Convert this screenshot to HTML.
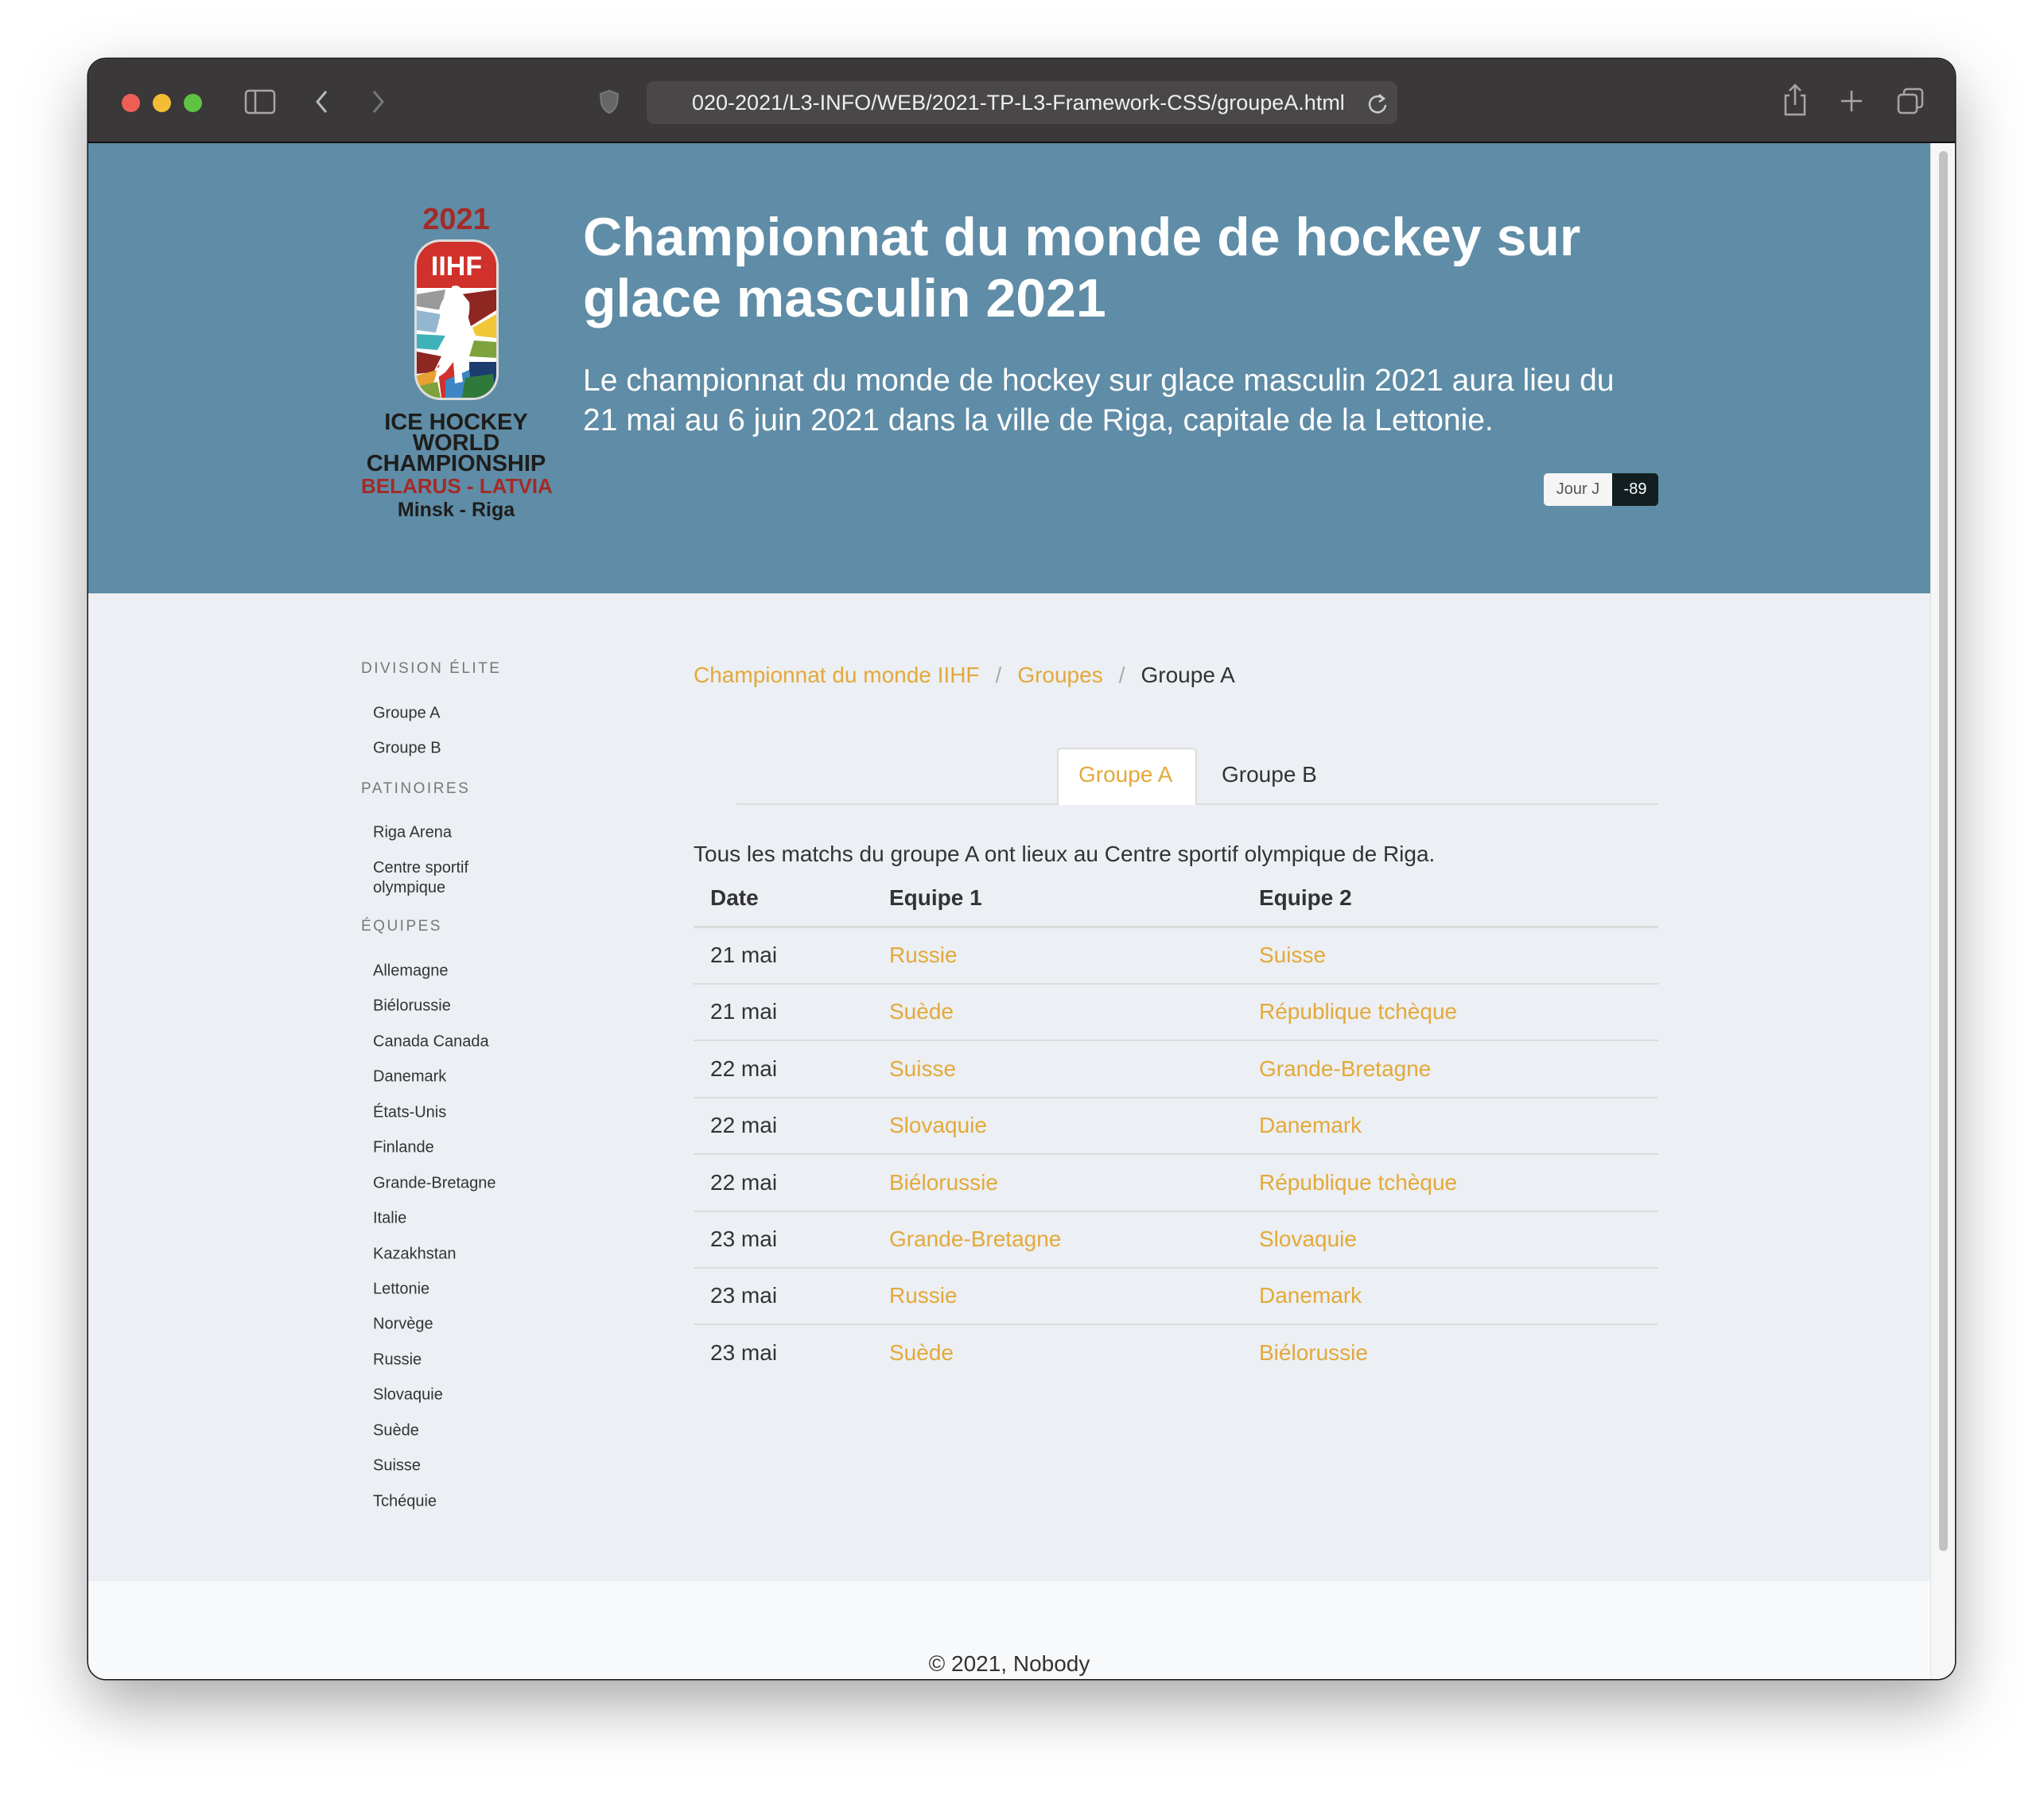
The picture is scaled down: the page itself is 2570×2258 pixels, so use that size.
<!DOCTYPE html>
<html><head><meta charset="utf-8"><style>
*{margin:0;padding:0;box-sizing:border-box}
body{width:2570px;height:2258px;background:#fff;font-family:"Liberation Sans",Arial,sans-serif;position:relative;overflow:hidden}
.win{position:absolute;left:111px;top:74px;width:2347px;height:2037px;border-radius:22px;overflow:hidden;box-shadow:0 30px 80px rgba(0,0,0,.35),0 0 0 1.5px #1a1a1a;background:#eceff3}
.tb{position:absolute;left:0;top:0;width:100%;height:106px;background:#3b3839;border-bottom:2px solid #111}
.dot{position:absolute;top:44px;width:23px;height:23px;border-radius:50%}
.url{position:absolute;left:702px;top:28px;width:944px;height:54px;background:#4a4748;border-radius:10px;color:#eee;font-size:27px;line-height:54px;padding-left:57px;white-space:nowrap}
.hdr{position:absolute;left:0;top:106px;width:2316px;height:566px;background:#5f8ca6}
.sb{position:absolute;left:2316px;top:106px;width:31px;height:1931px;background:#f6f6f6;border-left:1px solid #e2e2e2}
.thumb{position:absolute;left:2327px;top:116px;width:11px;height:1760px;background:#c2c2c2;border-radius:6px}
.abs{position:absolute;white-space:nowrap}
h1{position:absolute;left:622px;top:80px;color:#fff;font-size:68px;line-height:77px;font-weight:bold;width:1400px}
.lead{position:absolute;left:622px;top:274px;color:#fff;font-size:39px;line-height:50px;width:1340px}
.side-h{position:absolute;left:343px;font-size:19px;letter-spacing:2.5px;color:#777;transform:translateY(-50%)}
.side-i{position:absolute;left:358px;font-size:20px;color:#333;transform:translateY(-50%);line-height:25px}
.cell{position:absolute;font-size:28px;color:#333;transform:translateY(-50%)}
.y,.cell.y{color:#e3a93a}
.hr{position:absolute;left:761px;width:1213px;height:2px;background:#dcdcdc}
</style></head><body>
<div class="win">
 <div class="tb">
  <div class="dot" style="left:42px;background:#ed5f57"></div>
  <div class="dot" style="left:81px;background:#f5bd36"></div>
  <div class="dot" style="left:120px;background:#5fc245"></div>
  <svg class="abs" style="left:196px;top:38px" width="40" height="32" viewBox="0 0 40 32"><rect x="2" y="2" width="36" height="28" rx="4" fill="none" stroke="#a8a5a6" stroke-width="2.5"/><line x1="14" y1="2" x2="14" y2="30" stroke="#a8a5a6" stroke-width="2.5"/></svg>
  <svg class="abs" style="left:284px;top:38px" width="20" height="32"><path d="M15 3 L4 16 L15 29" fill="none" stroke="#bbb" stroke-width="3"/></svg>
  <svg class="abs" style="left:355px;top:38px" width="20" height="32"><path d="M4 3 L15 16 L4 29" fill="none" stroke="#777" stroke-width="3"/></svg>
  <svg class="abs" style="left:642px;top:38px" width="26" height="32"><path d="M13 2 L24 6 L23 18 Q20 27 13 30 Q6 27 3 18 L2 6 Z" fill="#666" stroke="#777" stroke-width="2"/></svg>
  <div class="url">020-2021/L3-INFO/WEB/2021-TP-L3-Framework-CSS/groupeA.html</div>
  <svg class="abs" style="left:1608px;top:42px" width="26" height="28"><path d="M20 8 A10 10 0 1 0 23 16" fill="none" stroke="#ccc" stroke-width="2.5"/><path d="M15 3 L21 8 L15 12" fill="none" stroke="#ccc" stroke-width="2.5"/></svg>
  <svg class="abs" style="left:2130px;top:30px" width="32" height="44"><path d="M9 16 H4 V40 H28 V16 H23 M16 28 V3 M9 10 L16 3 L23 10" fill="none" stroke="#a8a5a6" stroke-width="2.5"/></svg>
  <svg class="abs" style="left:2202px;top:38px" width="30" height="30"><path d="M15 2 V28 M2 15 H28" stroke="#a8a5a6" stroke-width="2.5"/></svg>
  <svg class="abs" style="left:2274px;top:36px" width="34" height="34"><rect x="9" y="2" width="23" height="23" rx="4" fill="none" stroke="#a8a5a6" stroke-width="2.5"/><rect x="2" y="9" width="23" height="23" rx="4" fill="#3b3839" stroke="#a8a5a6" stroke-width="2.5"/></svg>
 </div>
 <div class="hdr">
  <div class="abs" style="left:343px;top:75px;width:239px;text-align:center;color:#a42a26;font-weight:bold;font-size:38px">2021</div>
  <svg class="abs" style="left:409px;top:120px" width="108" height="204" viewBox="0 0 108 204">
   <defs><clipPath id="c"><rect x="4" y="4" width="100" height="196" rx="30"/></clipPath></defs>
   <rect x="1" y="1" width="106" height="202" rx="33" fill="#ddd"/>
   <g clip-path="url(#c)">
    <rect x="0" y="0" width="108" height="210" fill="#fff"/>
    <rect x="0" y="0" width="108" height="62" fill="#d0312a"/>
    <polygon points="4,70 40,64 35,90 4,85" fill="#9a9a9a"/>
    <polygon points="4,90 34,95 28,118 4,115" fill="#93b7cf"/>
    <polygon points="4,120 40,122 30,140 4,138" fill="#3fb2b8"/>
    <polygon points="4,142 35,148 25,168 4,170" fill="#8e2621"/>
    <polygon points="4,172 30,165 22,192 4,190" fill="#e8a132"/>
    <polygon points="60,70 104,64 104,90 72,110" fill="#8e2621"/>
    <polygon points="74,112 104,95 104,125 78,122" fill="#f1c73a"/>
    <polygon points="76,128 104,130 104,150 70,148" fill="#7fa33c"/>
    <polygon points="70,155 104,155 104,200 70,200" fill="#1c3d6e"/>
    <polygon points="30,160 55,150 60,200 35,200" fill="#d0312a"/>
    <polygon points="40,178 70,165 75,200 40,205" fill="#3c86c6"/>
    <polygon points="65,175 100,170 104,205 60,205" fill="#2f7a3b"/>
    <polygon points="8,185 30,180 35,205 8,205" fill="#7fa33c"/>
    <path d="M48 60 Q60 56 62 70 L70 80 Q72 100 62 112 L66 130 L58 150 L62 180 L52 182 L50 155 L40 168 L30 175 L28 168 L38 150 L42 128 L36 110 L32 90 Q36 72 48 68 Z" fill="#fff"/>
   </g>
   <text x="54" y="46" text-anchor="middle" fill="#fff" font-family="Liberation Sans" font-weight="bold" font-size="34">IIHF</text>
  </svg>
  <div class="abs" style="left:343px;top:338px;width:239px;text-align:center;color:#1d1d1b;font-weight:bold;font-size:29px;line-height:26px">ICE HOCKEY<br>WORLD<br>CHAMPIONSHIP</div>
  <div class="abs" style="left:343px;top:418px;width:239px;text-align:center;color:#a42a26;font-weight:bold;font-size:26px;line-height:26px">BELARUS - LATVIA</div>
  <div class="abs" style="left:343px;top:448px;width:239px;text-align:center;color:#1d1d1b;font-weight:bold;font-size:25px;line-height:26px">Minsk - Riga</div>
  <h1>Championnat du monde de hockey sur glace masculin 2021</h1>
  <div class="lead">Le championnat du monde de hockey sur glace masculin 2021 aura lieu du 21 mai au 6 juin 2021 dans la ville de Riga, capitale de la Lettonie.</div>
  <div class="abs" style="left:1830px;top:415px;width:86px;height:41px;background:#f5f5f5;border-radius:5px 0 0 5px;color:#555;font-size:20px;line-height:41px;text-align:center">Jour J</div>
  <div class="abs" style="left:1916px;top:415px;width:58px;height:41px;background:#121e21;border-radius:0 5px 5px 0;color:#fff;font-size:20px;line-height:41px;text-align:center">-89</div>
 </div>
 <div class="sb"></div><div class="thumb"></div>

 <div class="side-h" style="top:767px">DIVISION ÉLITE</div>
 <div class="side-i" style="top:823px">Groupe A</div>
 <div class="side-i" style="top:867px">Groupe B</div>
 <div class="side-h" style="top:918px">PATINOIRES</div>
 <div class="side-i" style="top:973px">Riga Arena</div>
 <div class="side-i" style="top:1030px">Centre sportif<br>olympique</div>
 <div class="side-h" style="top:1091px">ÉQUIPES</div>
 <div class="side-i" style="top:1147px">Allemagne</div>
 <div class="side-i" style="top:1191px">Biélorussie</div>
 <div class="side-i" style="top:1236px">Canada Canada</div>
 <div class="side-i" style="top:1280px">Danemark</div>
 <div class="side-i" style="top:1325px">États-Unis</div>
 <div class="side-i" style="top:1369px">Finlande</div>
 <div class="side-i" style="top:1414px">Grande-Bretagne</div>
 <div class="side-i" style="top:1458px">Italie</div>
 <div class="side-i" style="top:1503px">Kazakhstan</div>
 <div class="side-i" style="top:1547px">Lettonie</div>
 <div class="side-i" style="top:1591px">Norvège</div>
 <div class="side-i" style="top:1636px">Russie</div>
 <div class="side-i" style="top:1680px">Slovaquie</div>
 <div class="side-i" style="top:1725px">Suède</div>
 <div class="side-i" style="top:1769px">Suisse</div>
 <div class="side-i" style="top:1814px">Tchéquie</div>

 <div class="cell" style="left:761px;top:775px"><span class="y">Championnat du monde IIHF</span><span style="color:#aaa;padding:0 20px">/</span><span class="y">Groupes</span><span style="color:#aaa;padding:0 20px">/</span>Groupe A</div>
 <div class="abs" style="left:815px;top:936px;width:1159px;height:2px;background:#dcdcdc"></div>
 <div class="abs" style="left:1218px;top:866px;width:176px;height:72px;background:#fff;border:2px solid #dcdcdc;border-bottom:none;border-radius:6px 6px 0 0"></div>
 <div class="cell y" style="left:1245px;top:900px">Groupe A</div>
 <div class="cell" style="left:1425px;top:900px">Groupe B</div>
 <div class="cell" style="left:761px;top:1000px">Tous les matchs du groupe A ont lieux au Centre sportif olympique de Riga.</div>
 <div class="cell" style="left:782px;top:1055px;font-weight:bold">Date</div>
 <div class="cell" style="left:1007px;top:1055px;font-weight:bold">Equipe 1</div>
 <div class="cell" style="left:1472px;top:1055px;font-weight:bold">Equipe 2</div>
 <div class="hr" style="top:1090px;height:3px"></div>

 <div class="cell" style="left:782px;top:1127px">21 mai</div><div class="cell y" style="left:1007px;top:1127px">Russie</div><div class="cell y" style="left:1472px;top:1127px">Suisse</div>
 <div class="hr" style="top:1162px"></div>
 <div class="cell" style="left:782px;top:1198px">21 mai</div><div class="cell y" style="left:1007px;top:1198px">Suède</div><div class="cell y" style="left:1472px;top:1198px">République tchèque</div>
 <div class="hr" style="top:1233px"></div>
 <div class="cell" style="left:782px;top:1270px">22 mai</div><div class="cell y" style="left:1007px;top:1270px">Suisse</div><div class="cell y" style="left:1472px;top:1270px">Grande-Bretagne</div>
 <div class="hr" style="top:1305px"></div>
 <div class="cell" style="left:782px;top:1341px">22 mai</div><div class="cell y" style="left:1007px;top:1341px">Slovaquie</div><div class="cell y" style="left:1472px;top:1341px">Danemark</div>
 <div class="hr" style="top:1376px"></div>
 <div class="cell" style="left:782px;top:1413px">22 mai</div><div class="cell y" style="left:1007px;top:1413px">Biélorussie</div><div class="cell y" style="left:1472px;top:1413px">République tchèque</div>
 <div class="hr" style="top:1448px"></div>
 <div class="cell" style="left:782px;top:1484px">23 mai</div><div class="cell y" style="left:1007px;top:1484px">Grande-Bretagne</div><div class="cell y" style="left:1472px;top:1484px">Slovaquie</div>
 <div class="hr" style="top:1519px"></div>
 <div class="cell" style="left:782px;top:1555px">23 mai</div><div class="cell y" style="left:1007px;top:1555px">Russie</div><div class="cell y" style="left:1472px;top:1555px">Danemark</div>
 <div class="hr" style="top:1590px"></div>
 <div class="cell" style="left:782px;top:1627px">23 mai</div><div class="cell y" style="left:1007px;top:1627px">Suède</div><div class="cell y" style="left:1472px;top:1627px">Biélorussie</div>

 <div class="abs" style="left:0;top:1914px;width:2316px;height:123px;background:#f8f9fa"></div>
 <div class="cell" style="left:0;width:2316px;text-align:center;top:2018px">© 2021, Nobody</div>
</div>
</body></html>
